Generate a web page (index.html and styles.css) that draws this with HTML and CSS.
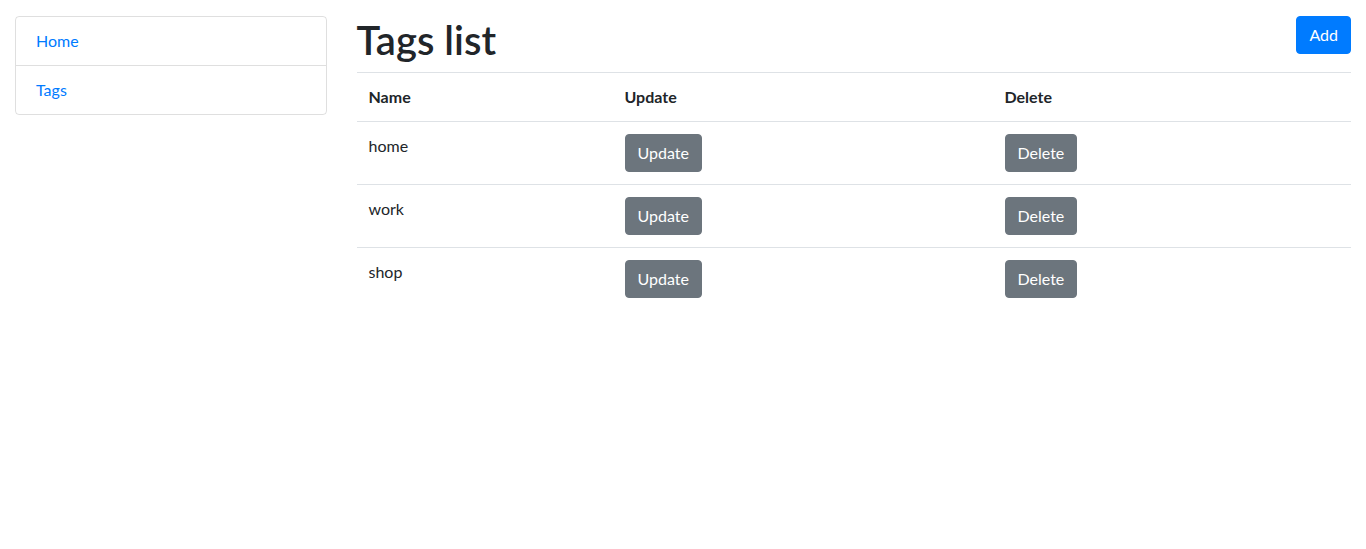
FILE: index.html
```html
<!DOCTYPE html>
<html lang="en">
<head>
<meta charset="utf-8">
<title>Tags list</title>
<link rel="stylesheet" href="styles.css">
</head>
<body>
<div class="container">
  <div class="row">
    <aside class="col-side">
      <ul class="list-group">
        <li class="list-item"><a href="#">Home</a></li>
        <li class="list-item"><a href="#">Tags</a></li>
      </ul>
    </aside>
    <main class="col-main">
      <div class="header">
        <h1 class="title">Tags list</h1>
        <button class="btn btn-primary">Add</button>
      </div>
      <table class="table">
        <thead>
          <tr><th class="c-name">Name</th><th class="c-upd">Update</th><th>Delete</th></tr>
        </thead>
        <tbody>
          <tr><td>home</td><td><button class="btn btn-secondary">Update</button></td><td><button class="btn btn-secondary">Delete</button></td></tr>
          <tr><td>work</td><td><button class="btn btn-secondary">Update</button></td><td><button class="btn btn-secondary">Delete</button></td></tr>
          <tr><td>shop</td><td><button class="btn btn-secondary">Update</button></td><td><button class="btn btn-secondary">Delete</button></td></tr>
        </tbody>
      </table>
    </main>
  </div>
</div>
</body>
</html>
```
FILE: styles.css
```css
* { box-sizing: border-box; }
body {
  margin: 0;
  font-family: Lato, "Liberation Sans", sans-serif;
  font-size: 16px;
  line-height: 1.5;
  color: #212529;
  background: #fff;
}
.container { padding: 0 15px; }
.row { display: flex; margin: 0 -15px; }
.col-side { flex: 0 0 25%; max-width: 25%; padding: 0 15px; }
.col-main { flex: 0 0 75%; max-width: 75%; padding: 0 15px; }
.list-group {
  list-style: none;
  margin: 16px 0 0;
  padding: 0;
  border: 1px solid rgba(0,0,0,.125);
  border-radius: 4px;
}
.list-item { padding: 12px 20px; }
.list-item + .list-item { border-top: 1px solid rgba(0,0,0,.125); }
.list-item a { color: #007bff; text-decoration: none; }
.header {
  display: flex;
  justify-content: space-between;
  align-items: flex-start;
  margin-top: 16px;
}
.title {
  margin: 0 0 8px;
  font-size: 40px;
  font-weight: 600;
  line-height: 1.2;
}
.btn {
  font-family: inherit;
  font-size: 16px;
  line-height: 1.5;
  padding: 6px 12px;
  border: 1px solid transparent;
  border-radius: 4px;
  color: #fff;
  cursor: pointer;
}
.btn-primary { background: #007bff; border-color: #007bff; }
.btn-secondary { background: #6c757d; border-color: #6c757d; }
.table { width: 100%; border-collapse: collapse; }
.table th, .table td {
  padding: 12px;
  vertical-align: top;
  border-top: 1px solid #dee2e6;
  text-align: left;
}
.table th { font-weight: 700; }
.table thead th { border-bottom: 1px solid #dee2e6; border-top: 1px solid #dee2e6; }
.table thead th { vertical-align: bottom; }
.c-name { width: 256px; }
.c-upd { width: 380px; }
```
